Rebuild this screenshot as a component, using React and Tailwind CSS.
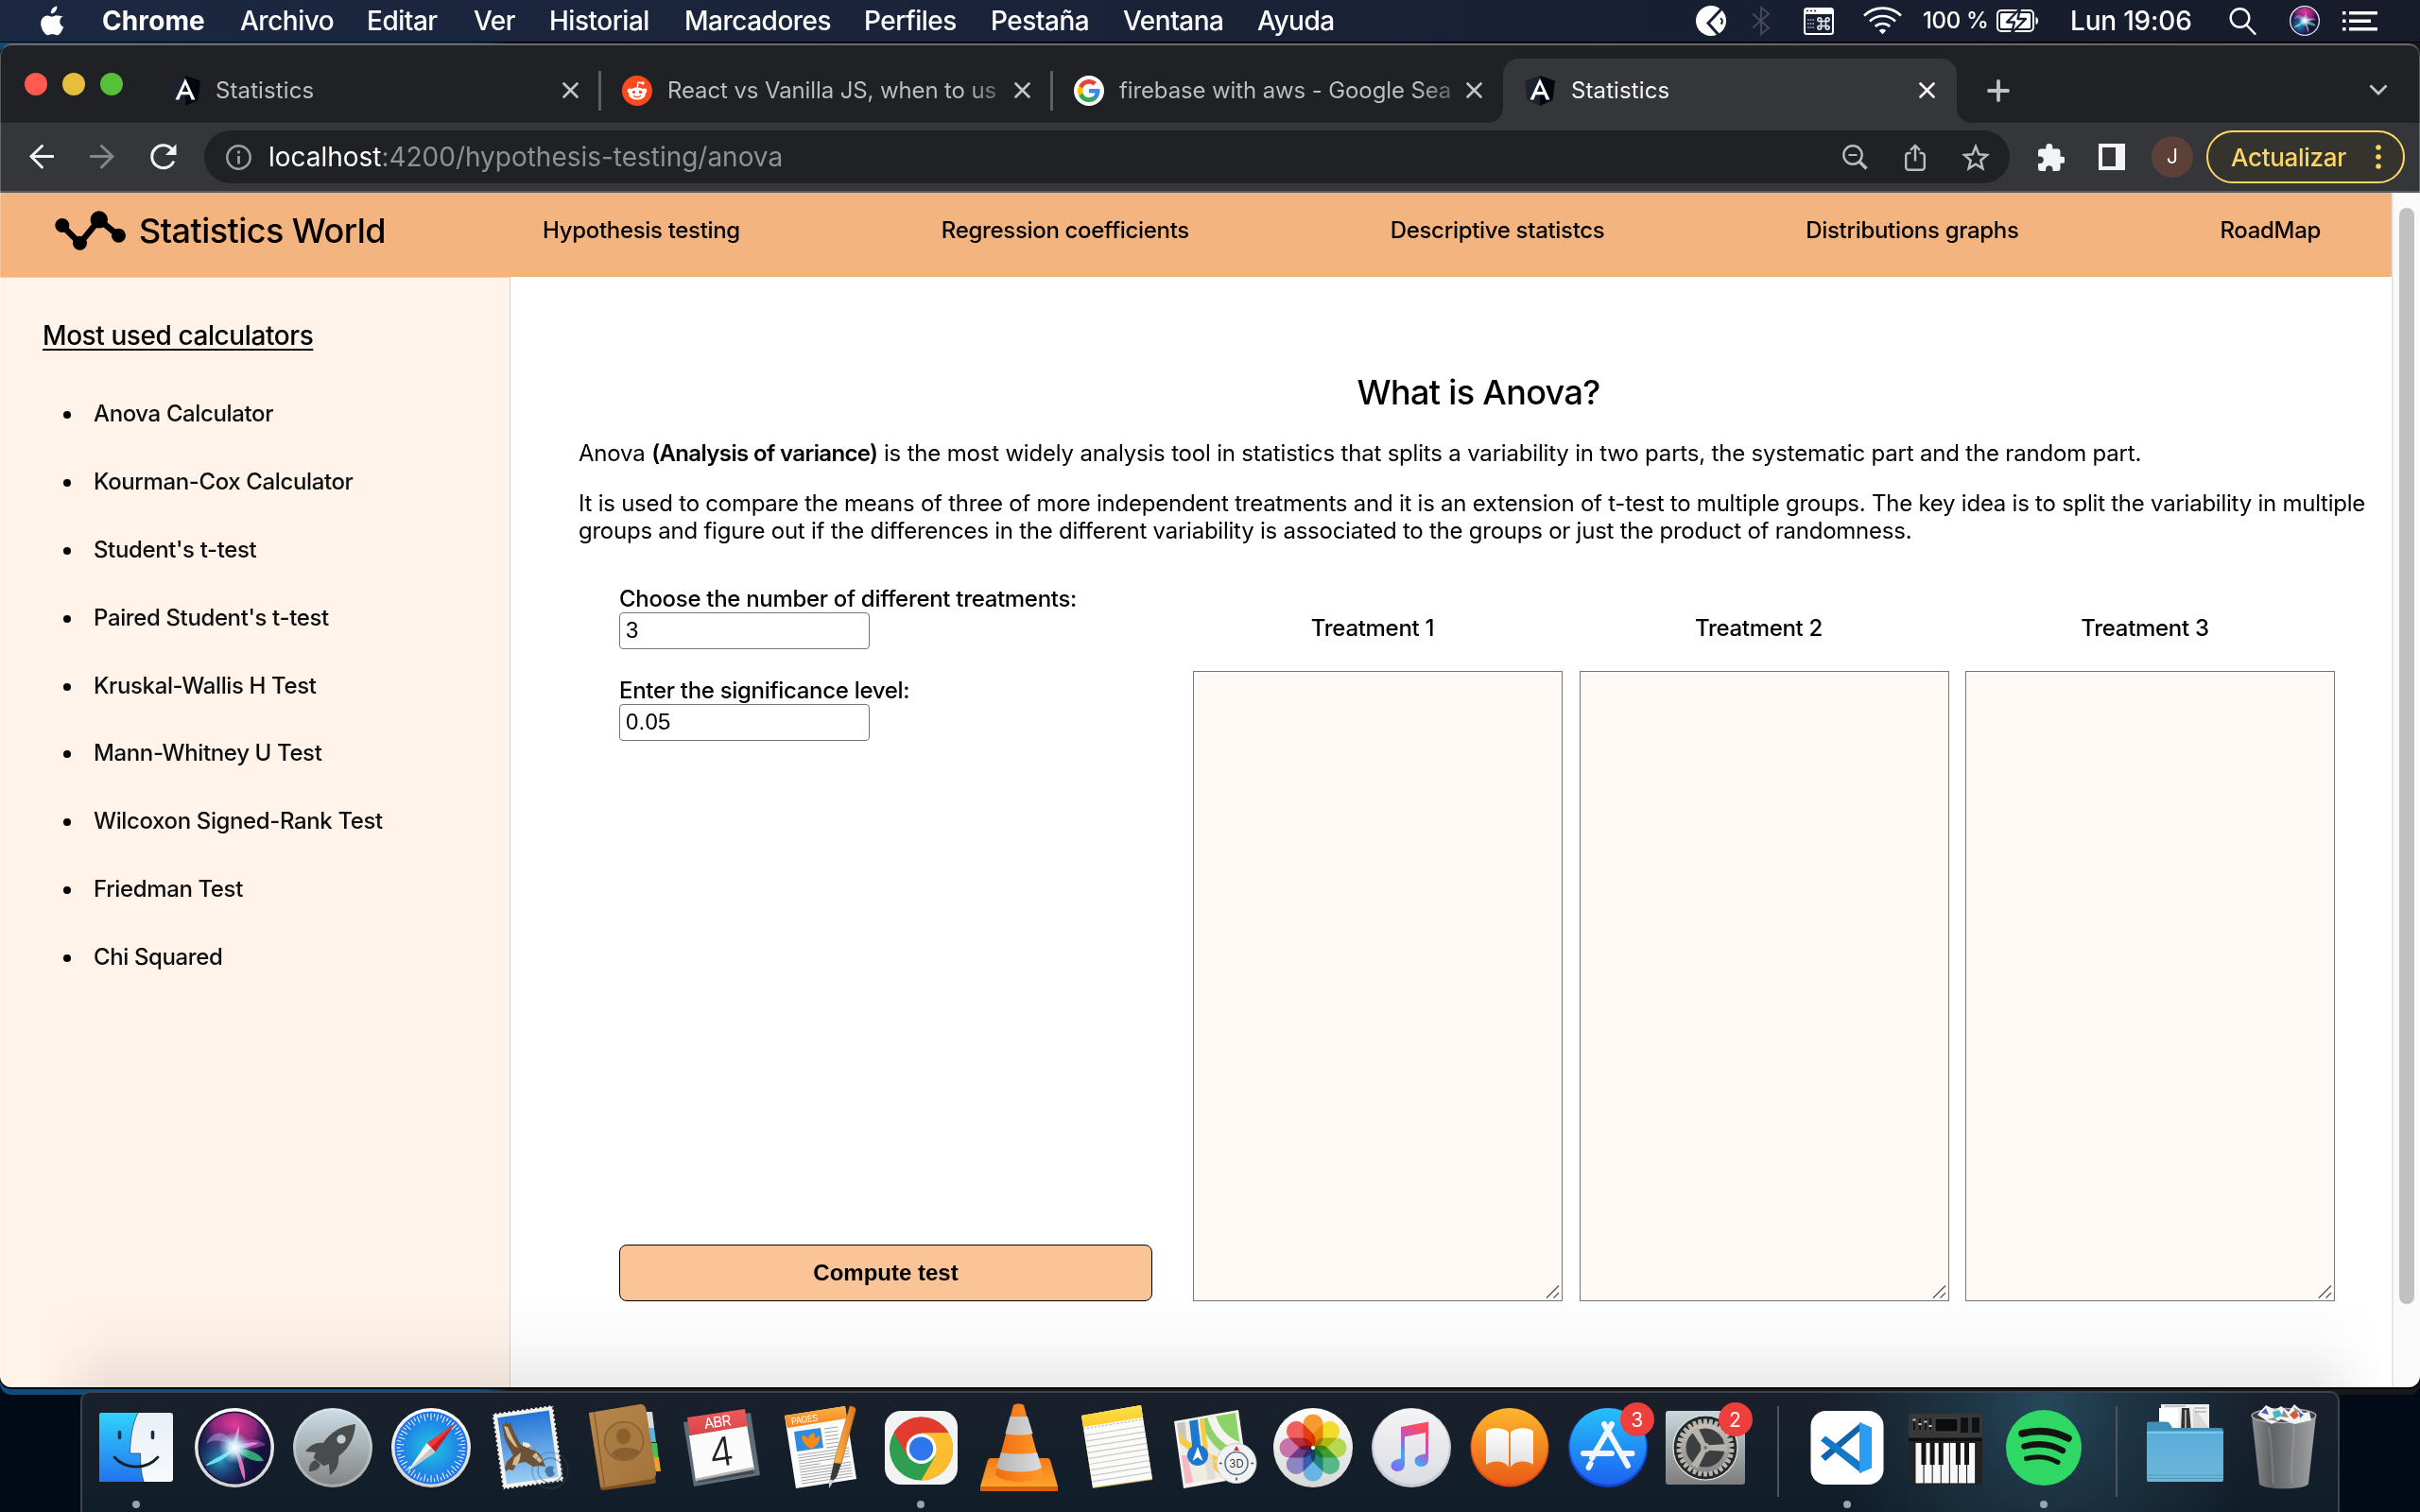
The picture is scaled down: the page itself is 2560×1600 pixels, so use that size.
import React from "react";

/* ---------- menu bar ---------- */

const MENU = [
  ["Archivo", "w-[134px]"],
  ["Editar", "w-[113px]"],
  ["Ver", "w-[80px]"],
  ["Historial", "w-[143px]"],
  ["Marcadores", "w-[190px]"],
  ["Perfiles", "w-[134px]"],
  ["Pestaña", "w-[140px]"],
  ["Ventana", "w-[142px]"],
  ["Ayuda", "w-[120px]"],
];

function AppleIcon() {
  return (
    <svg width="28" height="33" viewBox="0 0 28 33" fill="#fff" className="shrink-0">
      <path d="M19.3 0.6c.3 2-.5 4-1.7 5.4-1.200 1.500-3 2.500-4.700 2.300-.3-1.900.6-3.900 1.700-5.200C15.800 1.700 17.700.7 19.300.6z" />
      <path d="M26.300 11.700c-2.200 1.300-3.400 3.200-3.400 5.600 0 2.800 1.600 4.900 4 5.900-.6 1.900-1.600 3.700-2.700 5.300-1.200 1.700-2.500 3.300-4.400 3.300-1.900 0-2.500-1.100-4.700-1.100s-2.900 1.100-4.700 1.200c-1.900.1-3.300-1.800-4.500-3.500C3.400 24.900 1.500 19 4 14.600c1.200-2.200 3.500-3.600 5.900-3.600 1.900 0 3.600 1.300 4.700 1.300 1.100 0 3.200-1.600 5.500-1.300 1 0 3.700.4 6.200.7z" transform="translate(-.6 -.6)" />
    </svg>
  );
}

function MenuBar() {
  return (
    <div className="flex h-[45px] w-full shrink-0 items-center border-b border-black bg-linear-to-r from-[#1c2841] via-[#1a2238] to-[#171b2a] pl-[41px] text-[28px] font-medium tracking-[-0.5px] text-white">
      <AppleIcon />
      <span className="ml-[39px] w-[146px] shrink-0 font-bold tracking-[0.1px]">Chrome</span>
      {MENU.map(([t, w]) => (
        <span key={t} className={w + " shrink-0 whitespace-nowrap"}>{t}</span>
      ))}
      <div className="flex-1" />
      <svg width="32" height="32" viewBox="0 0 32 32">
        <circle cx="16" cy="16" r="16" fill="#fff" />
        <path d="M27.500 3 13 18.500 25 32" fill="none" stroke="#1a2033" strokeWidth="3" />
        <path d="M26 13.500c2.500 1 2.500 4.500.5 6" fill="none" stroke="#1a2033" strokeWidth="2" />
      </svg>
      <svg width="18" height="32" viewBox="0 0 18 32" className="ml-[28px]" fill="none" stroke="#454a5a" strokeWidth="1.900">
        <path d="M0 8.500 17 23.500 9 30V2l8 6.500L0 23.500" />
      </svg>
      <svg width="32" height="29" viewBox="0 0 32 29" className="ml-[36px]">
        <rect x="1" y="1" width="30" height="27" rx="2.500" fill="none" stroke="#fff" strokeWidth="2" />
        <path d="M1 1h30v6H1z" fill="#fff" />
        <path d="M3 3.500h2M7 3.500h2M11 3.500h2" stroke="#1a2033" strokeWidth="1.600" />
        <path d="M4 13h7M4 17h7M4 21h7" stroke="#aeb2bd" strokeWidth="1.600" strokeDasharray="1.600 1.100" />
        <g fill="none" stroke="#dfe1e8" strokeWidth="1.700">
          <rect x="18.500" y="14.500" width="5" height="5" />
          <circle cx="16.800" cy="12.800" r="1.900" /><circle cx="25.200" cy="12.800" r="1.900" />
          <circle cx="16.800" cy="21.200" r="1.900" /><circle cx="25.200" cy="21.200" r="1.900" />
        </g>
      </svg>
      <svg width="41" height="30" viewBox="0 0 41 30" className="ml-[31px]" fill="none" stroke="#fff" strokeWidth="2.600">
        <path d="M1 9.500a28 28 0 0 1 39 0" /><path d="M7 15.500a19.500 19.500 0 0 1 27 0" /><path d="M12.800 21a11.500 11.500 0 0 1 15.400 0" />
        <path d="M16.800 25.300a6 6 0 0 1 7.400 0L20.500 29.300z" fill="#fff" stroke="none" />
      </svg>
      <span className="ml-[22px] w-[72px] shrink-0 whitespace-nowrap text-[24px] tracking-[-0.35px]">100 %</span>
      <svg width="46" height="26" viewBox="0 0 46 26" className="ml-[6px]">
        <rect x="1" y="2" width="38" height="22" rx="4" fill="none" stroke="#fff" strokeWidth="2" />
        <rect x="4" y="5" width="32" height="16" rx="1.500" fill="#fff" />
        <path d="M41.500 9c3.500 1 3.500 7 0 8z" fill="#fff" />
        <path d="M25 0 11 14.500h8L16 26l15-15h-8.500z" fill="#fff" stroke="#1a2033" strokeWidth="2.400" strokeLinejoin="round" />
      </svg>
      <span className="ml-[32px] w-[139px] shrink-0 whitespace-nowrap tracking-[-0.2px]">Lun 19:06</span>
      <svg width="29" height="30" viewBox="0 0 29 30" className="ml-[29px] mr-[1px]" fill="none" stroke="#fff" strokeWidth="2.400" strokeLinecap="round">
        <circle cx="11.500" cy="12" r="9.800" /><path d="m18.500 19.500 9 9.300" />
      </svg>
      <div className="ml-[34px]"><SiriGlyph size={32} id="mb" /></div>
      <svg width="37" height="22" viewBox="0 0 37 22" className="ml-[24px] mr-[45px]" fill="#fff">
        <path d="M0 1h3.500v3.500H0zM7 1h30v3.500H7zM0 9.500h3.500V13H0zM7 9.500h23V13H7zM0 18h3.500v3.500H0zM7 18h30v3.500H7z" />
      </svg>
    </div>
  );
}

function SiriGlyph({ size, id }) {
  const g = "siri" + id;
  return (
    <svg width={size} height={size} viewBox="0 0 84 84">
      <defs>
        <radialGradient id={g + "a"} cx=".5" cy=".18" r=".55"><stop offset="0" stopColor="#e23a97" /><stop offset=".55" stopColor="#a12a86" stopOpacity=".85" /><stop offset="1" stopColor="#2a1f5a" stopOpacity="0" /></radialGradient>
        <radialGradient id={g + "b"} cx=".3" cy=".68" r=".5"><stop offset="0" stopColor="#2fa8d8" stopOpacity=".9" /><stop offset="1" stopColor="#15205a" stopOpacity="0" /></radialGradient>
        <radialGradient id={g + "c"} cx=".5" cy=".5" r=".5"><stop offset="0" stopColor="#fff" /><stop offset=".35" stopColor="#d8f6ff" stopOpacity=".9" /><stop offset="1" stopColor="#8fe6ff" stopOpacity="0" /></radialGradient>
        <linearGradient id={g + "r"} x1="0" y1="0" x2="0" y2="1"><stop offset="0" stopColor="#fff" /><stop offset="1" stopColor="#cfcfd2" /></linearGradient>
      </defs>
      <circle cx="42" cy="42" r="42" fill={"url(#" + g + "r)"} />
      <circle cx="42" cy="42" r="38.500" fill="#14123c" />
      <circle cx="42" cy="42" r="37" fill={"url(#" + g + "a)"} />
      <circle cx="42" cy="42" r="37" fill={"url(#" + g + "b)"} />
      <path d="M42 42C34 20 18 24 12 38c8-6 20-4 30 4z" fill="#a9b8f5" opacity=".45" />
      <path d="M42 42c8-12 26-10 33-3-10 4-24 5-33 3z" fill="#c04ec0" opacity=".55" />
      <path d="M42 42c-8 6-24 12-31 19 14-2 25-10 31-19z" fill="#6fe9f5" opacity=".95" />
      <path d="M42 42c4 12 5 24 11 35 1-14-3-26-11-35z" fill="#f57ac0" opacity=".9" />
      <path d="M42 42c7 8 18 16 31 14-4-9-18-13-31-14z" fill="#35c07e" opacity=".85" />
      <path d="M40 42c1-9 4-17 7-24 0 9-1 17-3 24zM42 40c8-2 18-5 26-3-8 4-18 6-26 6z" fill="#f5b5e5" opacity=".7" />
      <circle cx="42" cy="42" r="17" fill={"url(#" + g + "c)"} />
    </svg>
  );
}

/* ---------- browser chrome ---------- */

function CloseX({ color }) {
  return (
    <svg width="17" height="17" viewBox="0 0 17 17" className="shrink-0" fill="none" stroke={color} strokeWidth="2.600" strokeLinecap="round">
      <path d="m1.500 1.500 14 14M15.500 1.500l-14 14" />
    </svg>
  );
}

function AngularIcon() {
  return (
    <svg width="32" height="32" viewBox="0 0 32 32" className="shrink-0">
      <path d="M16 0 0 5.500 2.500 26 16 32z" fill="#1c2230" />
      <path d="M16 0 32 5.500 29.500 26 16 32z" fill="#02060f" />
      <path d="M16 3 5.500 25.500h3.900l2.100-5.300h9l2.100 5.300h3.900zm0 6.500 3.300 7.500h-6.600z" fill="#fff" />
    </svg>
  );
}

function RedditIcon() {
  return (
    <svg width="32" height="32" viewBox="0 0 32 32" className="shrink-0">
      <circle cx="16" cy="16" r="16" fill="#ff4a1f" />
      <circle cx="8" cy="16" r="2.400" fill="#fff" /><circle cx="24" cy="16" r="2.400" fill="#fff" />
      <ellipse cx="16" cy="19" rx="9" ry="6.600" fill="#fff" />
      <path d="M16 12.500 17.300 7l4.500 1" fill="none" stroke="#fff" strokeWidth="1.300" />
      <circle cx="22" cy="8" r="1.700" fill="#fff" />
      <circle cx="12.600" cy="17.500" r="1.700" fill="#ff4a1f" /><circle cx="19.400" cy="17.500" r="1.700" fill="#ff4a1f" />
      <path d="M12.500 21.500c2 1.600 5 1.600 7 0" fill="none" stroke="#ff4a1f" strokeWidth="1.200" strokeLinecap="round" />
    </svg>
  );
}

function GoogleIcon() {
  return (
    <svg width="32" height="32" viewBox="0 0 32 32" className="shrink-0">
      <circle cx="16" cy="16" r="16" fill="#fff" />
      <g transform="translate(4 4)">
        <path fill="#4285f4" d="M23.500 12.300c0-.8-.1-1.600-.2-2.300H12v4.500h6.500a5.500 5.500 0 0 1-2.400 3.600v3h3.900c2.200-2.100 3.500-5.200 3.500-8.800z" />
        <path fill="#34a853" d="M12 24c3.200 0 6-1.100 8-2.900l-3.900-3c-1.100.7-2.500 1.200-4.100 1.200-3.100 0-5.800-2.100-6.700-5H1.300v3.100A12 12 0 0 0 12 24z" />
        <path fill="#fbbc05" d="M5.300 14.300a7.200 7.200 0 0 1 0-4.600V6.600h-4a12 12 0 0 0 0 10.800z" />
        <path fill="#ea4335" d="M12 4.700c1.800 0 3.300.6 4.600 1.800l3.400-3.400A12 12 0 0 0 1.300 6.600l4 3.100c.9-2.800 3.600-5 6.700-5z" />
      </g>
    </svg>
  );
}

function TabStrip() {
  return (
    <div className="flex h-[82px] w-full shrink-0 bg-[#202124] text-[24px] tracking-[0.1px] text-[#bdc1c6]">
      <div className="ml-[26px] mt-[29px] flex h-6 w-[104px] shrink-0 justify-between">
        <span className="size-6 rounded-full bg-[#fe5a52]" />
        <span className="size-6 rounded-full bg-[#e5bf3c]" />
        <span className="size-6 rounded-full bg-[#57bf38]" />
      </div>
      <div className="mt-[14px] flex h-[68px] flex-1 items-center pb-[1px]">
        <div className="ml-[50px] flex w-[455px] shrink-0 items-center">
          <AngularIcon />
          <span className="ml-[16px] flex-1">Statistics</span>
          <CloseX color="#c4c7c9" />
          <span className="ml-[22px] h-10 w-[1px] bg-[#5d5e62] outline-[0.5px] outline-[#5d5e62]" />
        </div>
        <div className="ml-[23px] flex w-[455px] shrink-0 items-center">
          <RedditIcon />
          <span className="ml-[16px] flex-1 overflow-hidden whitespace-nowrap bg-linear-to-r from-[#bdc1c6] from-[86%] to-[#3a3b3e] bg-clip-text tracking-[-0.12px] text-transparent">React vs Vanilla JS, when to us</span>
          <CloseX color="#c4c7c9" />
          <span className="ml-[22px] h-10 w-[1px] bg-[#5d5e62] outline-[0.5px] outline-[#5d5e62]" />
        </div>
        <div className="ml-[23px] flex w-[432px] shrink-0 items-center">
          <GoogleIcon />
          <span className="ml-[16px] flex-1 overflow-hidden whitespace-nowrap bg-linear-to-r from-[#bdc1c6] from-[86%] to-[#3a3b3e] bg-clip-text tracking-[-0.12px] text-transparent">firebase with aws - Google Sea</span>
          <CloseX color="#c4c7c9" />
        </div>
        <div className="relative ml-[22px] mb-[-1px] flex h-[68px] w-[480px] shrink-0 items-center rounded-t-[16px] bg-[#35363a] pb-[1px] pl-[23px] pr-[23px] text-white">
          <svg width="16" height="16" viewBox="0 0 16 16" className="absolute bottom-0 left-[-16px]" fill="#35363a"><path d="M16 0v16H0A16 16 0 0 0 16 0z" /></svg>
          <svg width="16" height="16" viewBox="0 0 16 16" className="absolute bottom-0 right-[-16px]" fill="#35363a"><path d="M0 0v16h16A16 16 0 0 1 0 0z" /></svg>
          <AngularIcon />
          <span className="ml-[17px] flex-1 text-[#f8f8f9]">Statistics</span>
          <CloseX color="#fff" />
        </div>
        <svg width="24" height="24" viewBox="0 0 24 24" className="ml-[32px]" stroke="#bfc2c6" strokeWidth="3.800" strokeLinecap="round"><path d="M12 2v20M2 12h20" /></svg>
        <div className="flex-1" />
        <svg width="20" height="13" viewBox="0 0 20 13" className="mr-[34px]" fill="none" stroke="#c4c7c9" strokeWidth="2.800"><path d="m1.500 1.500 8.500 8.500 8.500-8.500" /></svg>
      </div>
    </div>
  );
}

function Toolbar() {
  return (
    <div className="flex h-[74px] w-full shrink-0 items-center border-b-2 border-[#5b5c60] bg-[#35363a] pl-[31px]">
      <svg width="26" height="26" viewBox="0 0 26 26" fill="none" stroke="#f1f3f4" strokeWidth="2.900" strokeLinecap="round"><path d="M25 12.500H2M13.500 1.500 2 12.500l11.500 11.500" /></svg>
      <svg width="26" height="26" viewBox="0 0 26 26" className="ml-[38px]" fill="none" stroke="#86878a" strokeWidth="2.900" strokeLinecap="round"><path d="M1 12.500h23M12.500 1.500 24 12.500 12.500 24" /></svg>
      <svg width="28" height="28" viewBox="0 0 28 28" className="ml-[38px]" fill="none" stroke="#f1f3f4" strokeWidth="3"><path d="M23.300 6.500A12 12 0 1 0 24.800 18.500" /><path d="M27.500.5v11.500H16z" fill="#f1f3f4" stroke="none" /></svg>
      <div className="ml-[29px] flex h-14 w-[1910px] items-center rounded-full bg-[#202124] pl-[23px] pr-[21px]">
        <svg width="27" height="27" viewBox="0 0 27 27" fill="none" stroke="#9aa0a6" strokeWidth="2.500"><circle cx="13.500" cy="13.500" r="12.200" /><path d="M13.500 12v8.500M13.500 6.500v3" strokeWidth="2.800" /></svg>
        <span className="ml-[18px] whitespace-nowrap text-[28px] tracking-[-0.02px] text-white">localhost<span className="text-[#8f9194]">:4200/hypothesis-testing/anova</span></span>
        <div className="flex-1" />
        <svg width="27" height="27" viewBox="0 0 27 27" fill="none" stroke="#b9bbbd"><circle cx="11" cy="11" r="9.700" strokeWidth="2.400" /><path d="M6.500 11h9" strokeWidth="2" /><path d="m18 18 7.500 7.500" strokeWidth="3.600" /></svg>
        <svg width="22" height="29" viewBox="0 0 22 29" className="ml-[39px]" fill="none" stroke="#b9bbbd" strokeWidth="2.400"><path d="M6.500 10H4a2.800 2.800 0 0 0-2.800 2.800V25A2.800 2.800 0 0 0 4 27.800h14a2.800 2.800 0 0 0 2.800-2.800V12.800A2.800 2.800 0 0 0 18 10h-2.500M11 18.500V2.500M6 7l5-5 5 5" /></svg>
        <svg width="30" height="29" viewBox="0 0 30 29" className="ml-[38px]" fill="none" stroke="#b9bbbd" strokeWidth="2.500"><path d="m15 3 3.300 8.300 8.700.7-6.700 5.700 2.100 8.600L15 21.700l-7.400 4.600 2.100-8.600L3 12l8.700-.7z" /></svg>
      </div>
      <svg width="29" height="29" viewBox="1.500 1 20.500 21" className="ml-[29px]" fill="#f1f3f4"><path d="M20.500 11H19V7c0-1.100-.9-2-2-2h-4V3.500a2.500 2.500 0 0 0-5 0V5H4c-1.100 0-2 .9-2 2v3.800h1.500c1.500 0 2.700 1.200 2.700 2.700S5 16.200 3.500 16.200H2V20c0 1.100.9 2 2 2h3.800v-1.500c0-1.500 1.200-2.700 2.700-2.700s2.700 1.200 2.700 2.700V22H17c1.100 0 2-.9 2-2v-4h1.500a2.500 2.500 0 0 0 0-5z" /></svg>
      <svg width="28" height="28" viewBox="0 0 28 28" className="ml-[36px]" fill="#f1f3f4"><path fillRule="evenodd" d="M0 0h28v28H0zM4 4v20h14V4z" /></svg>
      <div className="ml-[28px] flex size-11 items-center justify-center rounded-full bg-[#5d4037] text-[21px] text-white">J</div>
      <div className="ml-[14px] flex h-14 w-[210px] items-center rounded-full border-2 border-[#fdd663] bg-[#35332d] pl-[24px] text-[26px] font-medium tracking-[-0.3px] text-[#fdd663]">
        Actualizar
        <svg width="6" height="26" viewBox="0 0 6 26" className="ml-[31px]" fill="#fdd663"><circle cx="3" cy="3" r="2.800" /><circle cx="3" cy="13" r="2.800" /><circle cx="3" cy="23" r="2.800" /></svg>
      </div>
    </div>
  );
}

/* ---------- web page ---------- */

const NAV = ["Hypothesis testing", "Regression coefficients", "Descriptive statistcs", "Distributions graphs", "RoadMap"];
const CALCS = ["Anova Calculator", "Kourman-Cox Calculator", "Student's t-test", "Paired Student's t-test", "Kruskal-Wallis H Test", "Mann-Whitney U Test", "Wilcoxon Signed-Rank Test", "Friedman Test", "Chi Squared"];

function SiteHeader() {
  return (
    <header className="flex h-[89px] shrink-0 items-center bg-[#f4b47f] pb-[10px] pl-[58px] pr-[75px] font-[530] text-black">
      <svg width="76" height="42" viewBox="0 0 76 42" className="shrink-0">
        <path d="M7.500 15.500 26.500 34.500 47 9.500 67.500 26.500" fill="none" stroke="#000" strokeWidth="6.500" />
        <circle cx="7.800" cy="15.500" r="7.500" /><circle cx="26.500" cy="34.300" r="7.500" /><circle cx="46.800" cy="9.400" r="9.200" /><circle cx="67.500" cy="26.300" r="7.500" />
      </svg>
      <span className="ml-[13px] whitespace-nowrap text-[36px] leading-none tracking-[-0.55px]">Statistics World</span>
      <nav className="ml-auto flex w-[1881px] justify-between text-[24px] leading-none tracking-[-0.32px]">
        {NAV.map((n) => <span key={n} className="whitespace-nowrap">{n}</span>)}
      </nav>
    </header>
  );
}

function Sidebar() {
  return (
    <aside className="w-[540px] shrink-0 border-r border-t border-[#d6d3d1] bg-[#fff3ea] pl-[45px] text-black">
      <h3 className="mt-[44px] text-[28px] font-[530] leading-[34px] tracking-[-0.42px] underline decoration-2 underline-offset-[4px]">Most used calculators</h3>
      <ul className="mt-[30px]">
        {CALCS.map((c) => (
          <li key={c} className="flex h-[71.900px] items-center text-[24px] font-[530] tracking-[-0.38px] text-[#0e0e0e]">
            <span className="ml-[22px] mr-[24px] mt-[2px] size-[8px] rounded-full bg-black" />{c}
          </li>
        ))}
      </ul>
    </aside>
  );
}

function Treatment({ n }) {
  return (
    <div className="flex flex-col">
      <span className="mt-[31px] pr-[11px] text-center text-[24px] font-[530] leading-[29px] tracking-[-0.3px]">Treatment {n}</span>
      <div className="mt-[31px] flex flex-1 items-end justify-end border border-[#767676] bg-[#fff9f5]">
        <svg width="18" height="18" viewBox="0 0 18 18" fill="none" stroke="#555" strokeWidth="1.300"><path d="M2 15.500 15 2.500M9.500 15.500l5.500-5.500" /></svg>
      </div>
    </div>
  );
}

function Field({ label, value }) {
  return (
    <label className="block">
      <span className="block text-[24px] font-[530] leading-[29px] tracking-[-0.31px]">{label}</span>
      <span className="flex h-[39px] w-[265px] items-center rounded-[4px] border border-[#767676] bg-white pb-[1px] pl-[6px] font-['Liberation_Sans',Arial,sans-serif] text-[24px] leading-none tracking-[0.2px]">{value}</span>
    </label>
  );
}

function Main() {
  return (
    <main className="flex-1 bg-white pl-[72px] pt-[100px] text-black">
      <h1 className="w-[1904px] text-center text-[36px] font-[530] leading-[44px] tracking-[-0.65px]">What is Anova?</h1>
      <p className="mt-[28px] whitespace-nowrap text-[24px] leading-[29px] tracking-[-0.190px]">
        Anova <b className="font-semibold tracking-[-0.63px]">(Analysis of variance)</b> is the most widely analysis tool in statistics that splits a variability in two parts, the systematic part and the random part.
      </p>
      <p className="mt-[24px] whitespace-nowrap text-[24px] leading-[29px] tracking-[-0.243px]">
        It is used to compare the means of three of more independent treatments and it is an extension of t-test to multiple groups. The key idea is to split the variability in multiple<br />
        groups and figure out if the differences in the different variability is associated to the groups or just the product of randomness.
      </p>
      <div className="mt-[43px] ml-[43px] flex h-[758px] gap-[43px]">
        <div className="flex w-[564px] flex-col gap-[29px]">
          <Field label="Choose the number of different treatments:" value="3" />
          <Field label="Enter the significance level:" value="0.05" />
          <button className="mt-auto h-[60px] rounded-[8px] border border-black bg-[#fbc497] font-['Liberation_Sans',Arial,sans-serif] text-[24px] font-bold">Compute test</button>
        </div>
        <div className="grid w-[1208px] grid-cols-3 gap-[17.500px]">
          <Treatment n={1} /><Treatment n={2} /><Treatment n={3} />
        </div>
      </div>
    </main>
  );
}

/* ---------- dock ---------- */

function Slot({ children, dot, wide }) {
  return (
    <div className={(wide ? "w-[104px]" : "w-[103.750px]") + " relative flex shrink-0 flex-col items-center"}>
      <svg width="104" height="104" viewBox="0 0 104 104">{children}</svg>
      {dot && <span className="mt-[4px] size-2 rounded-full bg-[#9aa3ae]" />}
    </div>
  );
}

function Grad({ id, a, b, x2 = 0, y2 = 1 }) {
  return <linearGradient id={id} x1="0" y1="0" x2={x2} y2={y2}><stop offset="0" stopColor={a} /><stop offset="1" stopColor={b} /></linearGradient>;
}

function Finder() {
  return (
    <Slot dot>
      <defs><Grad id="f1" a="#2fd3fd" b="#2373ee" /><Grad id="f2" a="#e9eff6" b="#f8fafc" /></defs>
      <rect x="13" y="15" width="78" height="73" rx="3" fill="url(#f2)" />
      <path d="M16 15h38c-6 12-8 26-8.500 43h11c0 10 .5 20 3.500 30H16a3 3 0 0 1-3-3V18a3 3 0 0 1 3-3z" fill="url(#f1)" />
      <path d="M54 15c-6 12-8 26-8.500 43h11c0 10 .5 20 3.500 30" fill="none" stroke="#1e3c5c" strokeWidth="1" opacity=".7" />
      <path d="M34.500 35.500v6M69.500 35.500v6" stroke="#1b2b3c" strokeWidth="3.600" strokeLinecap="round" />
      <path d="M29 62c12 13.500 34 13.500 46 0" fill="none" stroke="#14212f" strokeWidth="2.800" strokeLinecap="round" />
    </Slot>
  );
}

function Launchpad() {
  return (
    <Slot>
      <defs><Grad id="l1" a="#c8dbe3" b="#858585" /><Grad id="l2" a="#d6e4ea" b="#a8a8a8" /></defs>
      <circle cx="52" cy="52" r="42" fill="url(#l2)" /><circle cx="52" cy="52" r="39" fill="url(#l1)" />
      <path d="M76 27c-16 2-27 9-34 20-7-1-14 2-19 9l11 1c-1 2-2 4-2 6l10 8c2 0 4-1 6-2l1 12c7-5 10-12 9-20 11-8 17-19 18-34z" fill="#4a4b4d" />
      <circle cx="61" cy="43" r="4.700" fill="#c3cdd2" />
      <path d="M34 65c-6 2-7 6-7 12 6 0 10-2 12-7z" fill="#4a4b4d" />
    </Slot>
  );
}

function Safari() {
  const ticks = Array.from({ length: 60 }, (_, i) => i);
  return (
    <Slot>
      <defs><radialGradient id="s1"><stop offset="0" stopColor="#1fc9e0" /><stop offset="1" stopColor="#1f6fe8" /></radialGradient><Grad id="s2" a="#fff" b="#d0d0d0" /></defs>
      <circle cx="52" cy="52" r="42" fill="url(#s2)" /><circle cx="52" cy="52" r="38.500" fill="url(#s1)" />
      {ticks.map((i) => <path key={i} d={i % 2 ? "M52 15.500v4" : "M52 15.500v7.500"} stroke="#e8f6ff" strokeWidth="1.100" transform={"rotate(" + i * 6 + " 52 52)"} />)}
      <path d="M77 27 47.500 47l9 9.500z" fill="#ea3a3a" /><path d="M77 27 52 52l4.500 4.500z" fill="#c41f27" />
      <path d="M27 77 47.500 47l9 9.500z" fill="#f6f6f6" /><path d="M27 77 52 52l4.500 4.500z" fill="#c9c9c9" />
    </Slot>
  );
}

function Mail() {
  return (
    <Slot>
      <defs><Grad id="m1" a="#2375d6" b="#9bcdf2" /></defs>
      <g transform="rotate(-8 52 52)">
        <rect x="19" y="11" width="65" height="81" fill="#f5f3ee" />
        <rect x="19" y="11" width="65" height="81" fill="none" stroke="#151c29" strokeWidth="2.400" strokeDasharray="2.400 2.400" />
        <rect x="24" y="16" width="55" height="71" fill="url(#m1)" />
      </g>
      <path d="M24 27l3 1 1-4 3 3 2-2 4 11 7 13 6 1 4 4c5 0 9 3 12 8l4 10-6-1-7 1-8-5-6 1-4 2-3 6-5-1-3 2-1-4 2-6 7-7-4-7-5-10z" fill="#6e5136" />
      <path d="M26 29l4 1 5 11 6 11-4-2-7-9zM35 70l2-7 7-6-1 7-3 7zM60 57l7 9-3 2-8-7z" fill="#d2bc95" />
      <path d="M46 46l6 1 3 3-4 2-5-2z" fill="#f1e7d6" /><path d="M54 49l3 2-3 1z" fill="#e2a52c" />
      <circle cx="75" cy="76" r="19" fill="none" stroke="#41586f" strokeWidth="1.300" opacity=".35" /><circle cx="75" cy="76" r="13" fill="none" stroke="#41586f" strokeWidth="1.300" opacity=".5" />
      <path d="M71 73c2-2 7-2 8 0-2 2-1 5 1 6-2 5-8 5-9 1-2-2-2-5 0-7zM75 71l2-4" fill="#3b6a99" opacity=".85" />
    </Slot>
  );
}

function Contacts() {
  return (
    <Slot>
      <defs><Grad id="c1" a="#b9884c" b="#a37239" x2={1} /></defs>
      <path d="M71 14h8l2 17h-8z" fill="#d9d9d9" /><path d="M73 31h8l2 15H74z" fill="#58b6e8" /><path d="M74 47h10l1.500 15H76z" fill="#45c457" /><path d="M76 62h10l2 15H78z" fill="#f0a02f" />
      <path d="m12 17 58-9 13 80c0 1-1 2-3 2L27 97c-2 0-3-1-3-3z" fill="#7d5225" />
      <path d="M12 15 66 6c4 0 6 2 6.500 6L83 78c0 4-1 6-4 7L27 94c-2 0-3-1-3-2z" fill="url(#c1)" />
      <path d="m17.500 14 11 79" stroke="#8a6030" strokeWidth="1.500" />
      <circle cx="49" cy="45" r="20.500" fill="#a97a41" stroke="#8b6130" strokeWidth="1.600" />
      <ellipse cx="48.500" cy="40" rx="7.500" ry="8.500" fill="#8a602f" /><path d="M36 59c3-5 7-7 14-7s12 1 16 4c-7 10-22 12-30 3z" fill="#8a602f" />
    </Slot>
  );
}

function Calendar() {
  return (
    <Slot>
      <defs><Grad id="k1" a="#ee5a59" b="#d94545" /></defs>
      <path d="m8 25 71-10 10 66-70 12z" fill="#5e6e79" /><path d="m15 39 8 50 60-10-1-3z" fill="#42484d" />
      <path d="M14 39 75 28l8 47-62 12z" fill="#fbfbfb" />
      <path d="m21 84.500 61.500-12.200.5 3L21.500 88z" fill="#8a8a8a" opacity=".6" />
      <path d="m12 20 61-9 3 18-61 10z" fill="url(#k1)" />
      <text x="0" y="0" transform="translate(30.500 32) rotate(-8)" fill="#fff" fontSize="15.500" fontFamily="Inter, sans-serif" letterSpacing="-1">ABR</text>
      <text x="0" y="0" transform="translate(37 73) rotate(-8)" fill="#222" fontSize="42" fontWeight="300" fontFamily="Inter, sans-serif">4</text>
    </Slot>
  );
}

function Pages() {
  const lines = Array.from({ length: 11 }, (_, i) => i);
  return (
    <Slot>
      <defs><Grad id="p1" a="#fbb040" b="#f58220" /><Grad id="p2" a="#fcb54c" b="#e0761c" x2={1} y2={0} /></defs>
      <path d="m11 18 64-10 12 77-64 10z" fill="#fcfcfc" /><path d="m11 18 64-10 2 13-63 10z" fill="url(#p1)" />
      <text transform="translate(18.500 27.500) rotate(-8.500)" fill="#fff" fontSize="9.500" fontFamily="Inter, sans-serif" letterSpacing="-.5">PAGES</text>
      <path d="m21 35 28-4 3 21-28 4z" fill="#2f8be0" /><path d="M38 53c-7-5-9-9-9-14 3 0 5 1 7 3 1-3 3-5 6-6 1 2 1 4 1 6l5-3c1 7-3 11-8 14z" fill="#f58a1f" />
      {lines.map((i) => <path key={i} d={"M" + (25 + i * 0.4) + " " + (60 + i * 3) + "l" + (i === 4 ? 22 : 54) + " " + (i === 4 ? -3.2 : -8)} stroke="#a4a4a4" strokeWidth="1" />)}
      {[0, 1, 2, 3, 4, 5].map((i) => <path key={"r" + i} d={"M" + (53 + i * 0.4) + " " + (32 + i * 4) + "l14 -2"} stroke="#a4a4a4" strokeWidth="1" />)}
      <path d="M80 8c4 0 7 2 6 5L71 69l-8-1z" fill="url(#p2)" stroke="#b5651c" strokeWidth=".6" /><path d="m63 68 8 1-5 14-4 4-3-1z" fill="#3a3a3c" /><path d="m58 85 5 2-5 8z" fill="#cfd3d6" />
    </Slot>
  );
}

function Chrome() {
  return (
    <Slot dot>
      <rect x="14" y="13" width="77" height="78" rx="17" fill="#f3f3f3" />
      <circle cx="52.500" cy="53" r="33.500" fill="#2f9e4f" />
      <path d="M23.500 36.200a33.500 33.500 0 0 1 58 0H52.500L38 61.400z" fill="#e33b2e" />
      <path d="M81.500 36.200A33.500 33.500 0 0 1 52.500 86.500L67 61.400 67 36.200z" fill="#fdbd2f" /><path d="M52.500 36.200h29l-14.500 25z" fill="#fdbd2f" />
      <circle cx="52.500" cy="53" r="16" fill="#fff" /><circle cx="52.500" cy="53" r="12.600" fill="#2f76ea" />
    </Slot>
  );
}

function Vlc() {
  return (
    <Slot>
      <defs><Grad id="v1" a="#f06a12" b="#ff9a2a" x2={1} y2={0} /><Grad id="v2" a="#f37a17" b="#fca52c" /><Grad id="v3" a="#b5b5b5" b="#dcdcdc" x2={1} y2={0} /></defs>
      <path d="M21 63h62l2 2 8 28H11l8-28z" fill="url(#v2)" /><path d="M11 93h82v5H11z" fill="#d9600d" />
      <path d="M27 80c8 10 42 10 50 0l-4-12H32z" fill="#d55c0c" opacity=".6" />
      <path d="M46 7c2-2 9-2 11 0l20 73c-6 10-44 10-50 0z" fill="url(#v1)" />
      <path d="M42.500 19h18.500l5.500 18c-6 2-23 2-29 0zM33 57c9 2 29 2 38 0l5 16c-8 6-39 6-48 0z" fill="url(#v3)" />
    </Slot>
  );
}

function Notes() {
  const lines = Array.from({ length: 9 }, (_, i) => i);
  return (
    <Slot>
      <defs><Grad id="n1" a="#ffe04a" b="#fbc926" /></defs>
      <path d="m14 18 63-11 12 79-63 9z" fill="#c9a932" /><path d="m14 18 63-11 12 78-63 9z" fill="#fbfbfa" /><path d="m14 18 63-11 2 13-63 10z" fill="url(#n1)" />
      <path d="m16 32 63-10" stroke="#b7b29c" strokeWidth="1.200" strokeDasharray="2 2" />
      {lines.map((i) => <path key={i} d={"M" + (17.500 + i * 1) + " " + (39 + i * 6.100) + "l62.500 -10"} stroke="#c9c9c7" strokeWidth="1.200" />)}
    </Slot>
  );
}

function Maps() {
  return (
    <Slot>
      <defs><clipPath id="mp"><path d="m11 26 62-11 9 65-62 10z" /></clipPath></defs>
      <path d="m8 24 68-12 10 71-68 12z" fill="#f6f4ee" />
      <g clipPath="url(#mp)">
        <rect width="104" height="104" fill="#efece4" />
        <path d="M33 10h60v60C60 66 38 44 33 10z" fill="#8ed36a" /><path d="M46 10c3 25 18 40 45 44" fill="none" stroke="#f6f4ee" strokeWidth="9" /><path d="M10 20h9l3 30-10-10z" fill="#c9c6bf" />
        <path d="M8 38 50 70l30 25" fill="none" stroke="#f8cb46" strokeWidth="7" /><path d="M36 10 42 60 90 76" fill="none" stroke="#f8cb46" strokeWidth="5" />
        <path d="M10 60h12l8 36H10z" fill="#f6b8c4" /><path d="m27 10 6 52" stroke="#1d78cf" strokeWidth="9" />
        <path d="M44 60l6 40" stroke="#e1ddd4" strokeWidth="8" />
      </g>
      <circle cx="33" cy="60" r="11" fill="#1b76d2" /><path d="m33 51 5.500 15-5.500-4-5.500 4z" fill="#fff" />
      <circle cx="74" cy="68.500" r="21" fill="#f1f2f4" stroke="#c9ccd0" strokeWidth="1" /><circle cx="74" cy="68.500" r="12" fill="none" stroke="#55758d" strokeWidth="1.600" />
      <path d="m74 50 3 5h-6z" fill="#e22b2b" /><path d="M74 83.500v3M56 68.500h2.500M89.500 68.500H92" stroke="#333" strokeWidth="1.500" />
      <text x="74" y="72.800" textAnchor="middle" fontSize="11.500" fill="#333" fontFamily="Inter, sans-serif">3D</text>
    </Slot>
  );
}

function Photos() {
  const petals = ["#f69b32", "#f3dc2b", "#b6d951", "#57b989", "#69b4e4", "#8c84c4", "#c874ad", "#f0605c"];
  return (
    <Slot>
      <defs><Grad id="ph" a="#ffffff" b="#d8d8d6" /></defs>
      <circle cx="52" cy="52" r="42" fill="url(#ph)" />
      <g style={{ isolation: "isolate" }}>
        {petals.map((c, i) => <rect key={c} x="41.500" y="16.500" width="21" height="35" rx="10.500" fill={c} style={{ mixBlendMode: "multiply" }} transform={"rotate(" + i * 45 + " 52 52)"} />)}
      </g>
      <circle cx="52" cy="52" r="2" fill="#fff" />
    </Slot>
  );
}

function Music() {
  return (
    <Slot>
      <defs><Grad id="mu" a="#f4f4f6" b="#dcdde2" /><linearGradient id="mn" x1="0" y1="1" x2=".5" y2="0"><stop offset="0" stopColor="#8f5cf6" /><stop offset=".4" stopColor="#3fa9f5" /><stop offset=".65" stopColor="#b05ad0" /><stop offset="1" stopColor="#fb4a64" /></linearGradient></defs>
      <circle cx="52" cy="52" r="42" fill="#c7cbd2" /><circle cx="52" cy="50.500" r="40" fill="url(#mu)" />
      <path d="M41 30 70 24.500V64c0 5-3 8-7.500 8-4 0-7-2.500-7-6 0-4 3.500-6.500 11.500-7.500V36L45 40.500V69c0 5-3 8-7.500 8-4 0-7-2.500-7-6 0-4 3.500-6.500 10.500-7.500z" fill="url(#mn)" />
    </Slot>
  );
}

function Books() {
  return (
    <Slot>
      <defs><Grad id="bk" a="#fdb62c" b="#ea5a16" /><Grad id="bw" a="#ffffff" b="#dedede" /></defs>
      <circle cx="52" cy="52" r="41.500" fill="#d8481a" /><circle cx="52" cy="50.500" r="40.500" fill="url(#bk)" />
      <path d="M51 36c-5-6-20-6-24-1v35c6-5 20-5 24 3zM53 36c5-6 20-6 24-1v35c-6-5-20-5-24 3z" fill="url(#bw)" />
    </Slot>
  );
}

function Badge({ children }) {
  return <span className="absolute left-[65px] top-[4px] flex size-9 items-center justify-center rounded-full bg-[#ee3f3c] text-[21px] leading-none text-white">{children}</span>;
}

function AppStore() {
  return (
    <div className="relative">
      <Slot>
        <defs><Grad id="as" a="#26c0fb" b="#1d62f0" /></defs>
        <circle cx="52" cy="52" r="42" fill="#1245d0" /><circle cx="52" cy="50.500" r="40.500" fill="url(#as)" />
        <g fill="none" stroke="#f2f5fa" strokeLinecap="round">
          <path d="m56 27-21 36M33.500 69l-2 4M48 27l25 44M26 58h30M66 58h11.500" strokeWidth="6" />
        </g>
      </Slot>
      <Badge>3</Badge>
    </div>
  );
}

function Settings() {
  const teeth = Array.from({ length: 30 }, (_, i) => i);
  return (
    <div className="relative">
      <Slot>
        <defs><Grad id="st" a="#c9d8dd" b="#7d7d7d" /><Grad id="sg" a="#c4bfb9" b="#8d8b88" /></defs>
        <rect x="10" y="13" width="84" height="78" rx="3" fill="url(#st)" />
        <circle cx="52" cy="52" r="34" fill="#26282a" stroke="#e4e8ea" strokeWidth="1.200" />
        {teeth.map((i) => <path key={i} d="M50.300 21.500h3.400l.8 7h-5z" fill="#b9b5b0" transform={"rotate(" + i * 12 + " 52 52)"} />)}
        <circle cx="52" cy="52" r="23" fill="#3d3e40" stroke="url(#sg)" strokeWidth="5" />
        {[90, 210, 330].map((a) => <path key={a} d="M49.500 52 48 29h8l-1.500 23z" fill="#b5b1ac" transform={"rotate(" + a + " 52 52)"} />)}
        <circle cx="52" cy="52" r="5" fill="#b5b1ac" /><circle cx="52" cy="52" r="2" fill="#777" />
      </Slot>
      <Badge>2</Badge>
    </div>
  );
}

function VSCode() {
  return (
    <Slot wide dot>
      <rect x="13.500" y="13" width="77" height="78" rx="16" fill="#fff" />
      <path d="m24 61 5 5 38-33v-8z" fill="#1064ab" />
      <path d="M24 44.500 29 39.500 67 68v11L24 44.500z" fill="#1478c8" />
      <path d="m65 25 13 5.500v43L65 79V25z" fill="#2a9df2" />
    </Slot>
  );
}

function Piano() {
  return (
    <Slot wide>
      <rect x="13" y="16" width="78" height="75" rx="2" fill="#222325" /><rect x="13" y="16" width="78" height="25" rx="2" fill="#37383a" />
      <rect x="41" y="21" width="24" height="14" fill="#0c0c0e" stroke="#4a4b4d" /><rect x="68" y="20" width="8" height="16" fill="#111" /><rect x="80" y="20" width="8" height="16" fill="#111" />
      <path d="M19 21v12M25 21v12M31 21v12M36 21v12" stroke="#0a0a0b" strokeWidth="1.500" /><path d="M17.500 22.500h3M23.500 27h3M29.500 24.500h3M34.500 29h3" stroke="#ccc" strokeWidth="1.800" />
      <rect x="13" y="42" width="78" height="3" fill="#0e0e0f" />
      {[0, 1, 2, 3, 4, 5, 6].map((i) => <rect key={i} x={20.500 + i * 9.100} y="47" width="8" height="42.500" fill="#f8f8f8" />)}
      {[0, 1, 2, 4, 5].map((i) => <rect key={i} x={26.500 + i * 9.100} y="46" width="5" height="24" fill="#141415" />)}
    </Slot>
  );
}

function Spotify() {
  return (
    <Slot wide dot>
      <circle cx="52" cy="52" r="40" fill="#2fd765" />
      <g fill="none" stroke="#10160f" strokeLinecap="round"><path d="M29 37c17-4.500 34-3 49 5" strokeWidth="7.500" /><path d="M31.500 50.500c14-4 28-2.500 40.500 4.500" strokeWidth="6.500" /><path d="M33.500 63.500c11.500-3.200 23-2 33.500 4" strokeWidth="5" /></g>
    </Slot>
  );
}

function Folder() {
  return (
    <Slot wide>
      <defs><Grad id="fo" a="#57aedb" b="#6fb6d9" /></defs>
      <path d="M26 6h51v30H26z" fill="#f0f0f0" /><path d="M24 10h20v26H24z" fill="#fff" /><path d="M48 10h8l2 26H47z" fill="#333" /><path d="M51 12h2v22h-2z" fill="#aaa" /><path d="m60 8 16 22-3 6H60z" fill="#d9d9d9" /><path d="M30 8h22M62 10h12M62 14h12" stroke="#999" />
      <path d="M11 27c0-2 1-2.500 3-2.500h17c3 0 4 1 5 3l2 3.500h51c2 0 3 1 3 3v8H11z" fill="#3f8fb8" />
      <rect x="11" y="34" width="81" height="54" rx="2" fill="url(#fo)" /><path d="M11 36h81" stroke="#86cdea" strokeWidth="1.500" /><path d="M11 81h81M11 84.500h81" stroke="#4f9cc2" strokeWidth="1.200" />
    </Slot>
  );
}

function Trash() {
  return (
    <Slot wide>
      <defs><linearGradient id="tr" x1="0" x2="1"><stop offset="0" stopColor="#8d8f91" /><stop offset=".3" stopColor="#5f6163" /><stop offset=".6" stopColor="#7a7c7e" /><stop offset="1" stopColor="#a2a4a6" /></linearGradient></defs>
      <path d="M18 18c0-5 68-5 68 0l-8 72c-2 7-50 7-52 0z" fill="url(#tr)" /><ellipse cx="52" cy="18" rx="34" ry="7.500" fill="#3d3f41" stroke="#a9abad" strokeWidth="1.500" />
      <path d="m24 17 9-10 10 5 6-4 8 6 6-8 10 9 6-1 2 9-18 4-14-5-10 5z" fill="#f2f2f2" /><path d="m40 14 7-2 3 6-8 3z" fill="#3fb8c6" /><path d="m58 17 6-5 4 6-5 4z" fill="#d8582f" /><path d="m28 15 5-5 3 7zM68 14l5 3-4 4z" fill="#4a5ac0" /><path d="m34 22 8-2 4 4zM52 12l5 8-8-1zM62 9l3 6 5-1z" fill="#8f8f8f" />
      <path d="M36 30c4 20 3 40 5 60M62 28c2 20-4 40-1 62" fill="none" stroke="#b8babc" strokeWidth="2.500" opacity=".25" />
    </Slot>
  );
}

function Divider() {
  return <div className="flex w-[46px] shrink-0 justify-center pl-[3px] pt-[8px]"><span className="h-24 w-[2px] bg-[#4b545f]" /></div>;
}

function Dock() {
  return (
    <div className="mx-[85px] flex h-[128px] w-[2390px] shrink-0 rounded-t-[10px] border-x-2 border-t-2 border-[#3a434e] bg-[#141b26] bg-[radial-gradient(circle_at_2077px_10px,#26475b_0,#1d3444_90px,transparent_230px),linear-gradient(180deg,#1a202b,#101e2a)] pl-[5.500px] pt-[6px]">
      <Finder />
      <Slot><svg x="10" y="10" width="84" height="84"><SiriGlyph size={84} id="dk" /></svg></Slot>
      <Launchpad /><Safari /><Mail /><Contacts /><Calendar /><Pages /><Chrome /><Vlc /><Notes /><Maps /><Photos /><Music /><Books /><AppStore /><Settings />
      <Divider />
      <VSCode /><Piano /><Spotify />
      <Divider />
      <Folder /><Trash />
    </div>
  );
}

/* ---------- desktop ---------- */

export default function App() {
  return (
    <div className="flex h-[1600px] w-[2560px] flex-col overflow-hidden bg-[#040b18] font-['Inter',sans-serif]">
      <MenuBar />
      <div className="h-[1431px] shrink-0 rounded-b-[12px] bg-linear-to-r from-[#0c4c80] from-20% via-[#17191c] via-21% to-[#17191c] to-[96%] pb-[8px]">
        <div className="relative mt-[1px] flex h-[1422px] w-full flex-col overflow-hidden rounded-[12px] border-t-2 border-[#66686b] bg-[#202124] shadow-[0_1px_0_1px_#000]">
          <TabStrip />
          <Toolbar />
          <div className="flex min-h-0 flex-1">
            <div className="flex w-[2530px] flex-col">
              <SiteHeader />
              <div className="flex min-h-0 flex-1"><Sidebar /><Main /></div>
            </div>
            <div className="w-[30px] border-l-2 border-[#e6e6e6] bg-[#fafafa] pl-[6px] pt-[16px]">
              <div className="h-[1160px] w-4 rounded-full bg-[#c1c1c1]" />
            </div>
          </div>
          <div className="pointer-events-none absolute bottom-0 left-[40px] right-[40px] h-[100px] bg-linear-to-b from-transparent via-black/2 to-black/8 mask-x-from-97%" />
          <div className="pointer-events-none absolute inset-0 rounded-[12px] border-x border-white/25" />
        </div>
      </div>
      <div className="-mt-[4px]"><Dock /></div>
    </div>
  );
}
